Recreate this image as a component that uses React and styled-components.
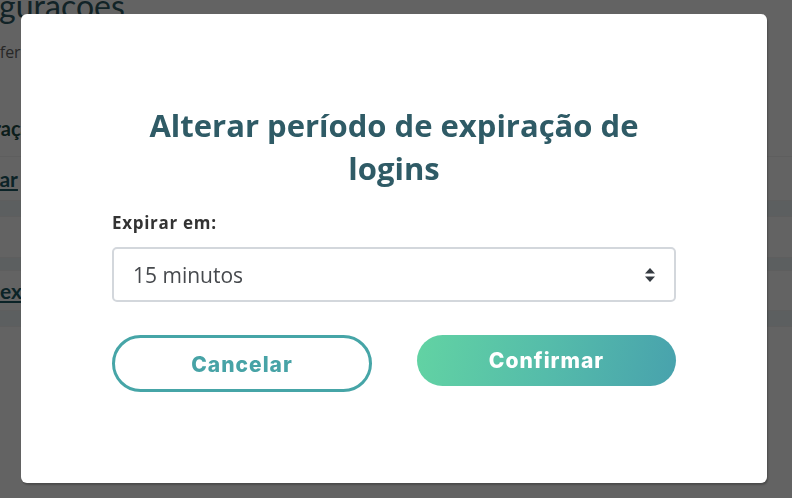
import React from "react";
import styled, { createGlobalStyle } from "styled-components";

const GlobalStyle = createGlobalStyle`
  html, body {
    margin: 0;
    padding: 0;
    width: 792px;
    height: 498px;
    overflow: hidden;
    background: #ffffff;
    font-family: "Open Sans", "Liberation Sans", sans-serif;
  }
`;

const teal = "#2f5b66";

/* page behind the modal */
const Page = styled.div`
  width: 792px;
  height: 498px;
  overflow: hidden;
  background: #ffffff;
`;

const PageInner = styled.div`
  margin-left: -76px;
  margin-top: -14px;
  width: 900px;
`;

const PageTitle = styled.h1`
  margin: 0;
  font-family: Lato, "Open Sans", sans-serif;
  font-weight: 400;
  font-size: 32px;
  line-height: 40px;
  color: ${teal};
`;

const PageSubtitle = styled.p`
  margin: 15px 0 0;
  font-size: 16px;
  line-height: 22px;
  color: #666;
`;

const SectionTitle = styled.h2`
  margin: 52px 0 0;
  font-family: Lato, sans-serif;
  font-size: 20px;
  font-weight: 700;
  line-height: 26px;
  color: #1f4d46;
`;

const Table = styled.div`
  margin-top: 15px;
  display: flex;
  flex-direction: column;
`;

const Row = styled.div`
  height: ${p => p.$h}px;
  display: flex;
  align-items: center;
  padding-left: ${p => p.$pad || 0}px;
  background: ${p => (p.$shade ? "#ecf4f6" : "#ffffff")};
  border-top: 1px solid #f3f3f3;
`;

const RowLink = styled.a`
  font-family: Lato, sans-serif;
  font-weight: 700;
  font-size: 21px;
  color: #1e5a66;
  text-decoration: underline;
`;

const Overlay = styled.div`
  position: fixed;
  inset: 0;
  background: rgba(0, 0, 0, 0.61);
`;

/* modal */
const Modal = styled.div`
  position: fixed;
  left: 21px;
  top: 14px;
  width: 746px;
  height: 469px;
  box-sizing: border-box;
  background: #ffffff;
  border-radius: 6px;
  box-shadow: 1px 2px 2px rgba(0, 0, 0, 0.25);
  padding: 90px 91px 0;
  display: flex;
  flex-direction: column;
`;

const Title = styled.h2`
  margin: 0 auto;
  max-width: 520px;
  text-align: center;
  font-family: "Open Sans", Lato, sans-serif;
  font-weight: 700;
  font-size: 31px;
  line-height: 43px;
  color: ${teal};
`;

const Label = styled.label`
  margin-top: 22px;
  font-family: "Open Sans", sans-serif;
  font-weight: 700;
  font-size: 17px;
  letter-spacing: 0.7px;
  line-height: 22px;
  color: #333;
`;

const SelectBox = styled.div`
  margin-top: 13px;
  height: 55px;
  box-sizing: border-box;
  border: 2px solid #d3d7dc;
  border-radius: 5px;
  display: flex;
  align-items: center;
  justify-content: space-between;
  padding: 0 18px 0 19px;
`;

const SelectValue = styled.span`
  font-family: "Open Sans", sans-serif;
  font-size: 21px;
  color: #46494d;
`;

const Actions = styled.div`
  margin-top: 33px;
  display: flex;
  justify-content: space-between;
  align-items: flex-start;
`;

const Button = styled.button`
  width: ${p => (p.$primary ? 259 : 260)}px;
  height: ${p => (p.$primary ? 51 : 57)}px;
  box-sizing: border-box;
  border-radius: 30px;
  font-family: Inter, "Open Sans", sans-serif;
  font-weight: 800;
  font-size: 21px;
  letter-spacing: 1px;
  cursor: pointer;
  border: ${p => (p.$primary ? "none" : "3px solid #46a5a7")};
  color: ${p => (p.$primary ? "#ffffff" : "#47a3a6")};
  background: ${p =>
    p.$primary
      ? "linear-gradient(100deg, #62d3a3 0%, #55bcaa 50%, #48a2ad 100%)"
      : "#ffffff"};
  padding-bottom: ${p => (p.$primary ? 2 : 0)}px;
`;

function SortArrows() {
  return (
    <svg width="12" height="16" viewBox="0 0 12 16">
      <path d="M6 1 L11 6.5 H1 Z" fill="#343a40" />
      <path d="M6 15 L11 9.5 H1 Z" fill="#343a40" />
    </svg>
  );
}

export default function App() {
  return (
    <>
      <GlobalStyle />
      <Page>
        <PageInner>
          <PageTitle>Configuracoes</PageTitle>
          <PageSubtitle>Ajuste preferências da sua conta</PageSubtitle>
          <SectionTitle>Configuração de segurança</SectionTitle>
          <Table>
            <Row $h={43} $pad={29}>
              <RowLink>Alterar</RowLink>
            </Row>
            <Row $h={15} $shade />
            <Row $h={40} />
            <Row $h={12} $shade />
            <Row $h={39} $pad={76}>
              <RowLink>expirar sessões</RowLink>
            </Row>
            <Row $h={15} $shade />
            <Row $h={40} />
          </Table>
        </PageInner>
      </Page>
      <Overlay />
      <Modal>
        <Title>Alterar período de expiração de logins</Title>
        <Label>Expirar em:</Label>
        <SelectBox>
          <SelectValue>15 minutos</SelectValue>
          <SortArrows />
        </SelectBox>
        <Actions>
          <Button>Cancelar</Button>
          <Button $primary>Confirmar</Button>
        </Actions>
      </Modal>
    </>
  );
}
